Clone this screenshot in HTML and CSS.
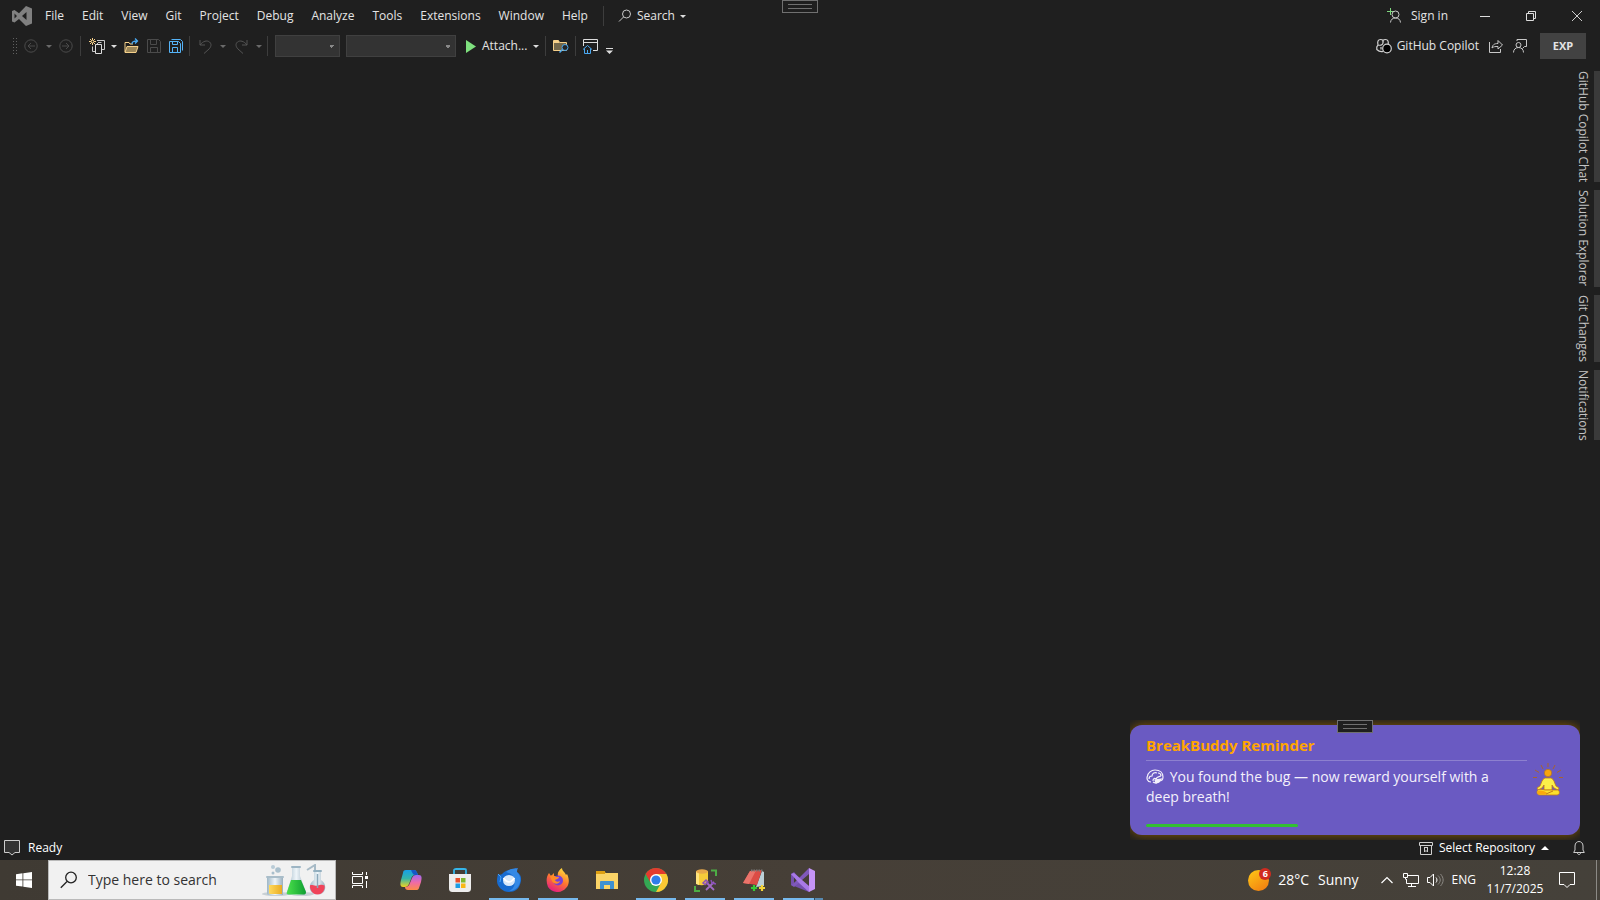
FILE: index.html
```html
<!DOCTYPE html>
<html lang="en">
<head>
<meta charset="utf-8">
<title>Visual Studio</title>
<link rel="stylesheet" href="styles.css">
</head>
<body>
<header class="titlebar">
  <svg class="logo" width="20" height="20" viewBox="0 0 20 20"><path fill="#808080" fill-rule="evenodd" d="M14 0l6 2.500v15L14 20 7 13l-4.500 3.500L0 15.500V5l2.500-1L7 7.200zM14.500 6L10 10l4.500 4zM2.500 7.500v5L5 10z"/></svg>
  <nav class="menu" aria-label="Main menu">
    <button>File</button><button>Edit</button><button>View</button><button>Git</button><button>Project</button><button>Debug</button><button>Analyze</button><button>Tools</button><button>Extensions</button><button>Window</button><button>Help</button>
  </nav>
  <span class="sep"></span>
  <button class="find"><svg width="14" height="14" viewBox="0 0 14 14" fill="none" stroke="#c8c8c8"><circle cx="8.500" cy="5" r="4"/><path d="M5.500 8L1 12.500"/></svg>Search<i class="caret lit"></i></button>
  <div class="spacer"></div>
  <button class="signin"><svg width="14" height="16" viewBox="0 0 14 16" fill="none" stroke="#c8c8c8"><path d="M3.500 0v7M0 3.500h7" stroke="#7fd67f"/><circle cx="8.500" cy="6.500" r="3.500"/><path d="M3.500 14.500c.3-3 2-4.500 5-4.500s4.700 1.500 5 4.500"/></svg>Sign in</button>
  <button class="win" aria-label="Minimize"><svg width="12" height="12" viewBox="0 0 12 12" stroke="#ddd"><path d="M1 6.500h10"/></svg></button>
  <button class="win" aria-label="Restore"><svg width="12" height="12" viewBox="0 0 12 12" fill="none" stroke="#ddd"><path d="M1.500 3.500h7v7h-7zM3.500 3.500v-2h7v7h-2"/></svg></button>
  <button class="win" aria-label="Close"><svg width="12" height="12" viewBox="0 0 12 12" stroke="#ccc"><path d="M1 1l10 10M11 1L1 11"/></svg></button>
</header>
<div class="handle top-handle"></div>

<div class="toolbar" role="toolbar" aria-label="Standard">
  <span class="grip"></span>
  <button aria-label="Back" class="back"><svg width="14" height="14" viewBox="0 0 14 14" fill="none" stroke="#4b4b4b"><circle cx="7" cy="7" r="6.200"/><path d="M11 7H4M7 4L4 7l3 3"/></svg><i class="caret"></i></button>
  <button aria-label="Forward" class="fwd"><svg width="14" height="14" viewBox="0 0 14 14" fill="none" stroke="#4b4b4b"><circle cx="7" cy="7" r="6.200"/><path d="M3 7h7M7 4l3 3-3 3"/></svg></button>
  <span class="sep"></span>
  <button aria-label="New project" class="new"><svg width="17" height="17" viewBox="0 0 17 17" fill="none"><path d="M8 2.500h7.500v9h-3M9 5.500H8M3.500 8.500v5h3M9 4.500h3.500" stroke="#c8c8c8"/><path d="M6.500 6.500h6v9h-6z" stroke="#ddd"/><path d="M3.500 0v7M0 3.500h7M1 1l5 5M6 1L1 6" stroke="#f5d08a"/><circle cx="3.500" cy="3.500" r="1" fill="#202020"/></svg><i class="caret lit"></i></button>
  <div class="files">
    <button aria-label="Open file"><svg width="15" height="16" viewBox="0 0 15 16" fill="none"><path d="M1 14V4.500h4l1 1.500h3" stroke="#f5d08a"/><path d="M1 14.500l2-6h11l-2 6z" fill="#9a8558" stroke="#f5d08a"/><path d="M8 6c0-2 1-3 5-3M11 .5L13.500 3 11 5.500" stroke="#4aa8f0" stroke-width="1.300"/></svg></button>
    <button aria-label="Save"><svg width="14" height="14" viewBox="0 0 14 14" fill="none" stroke="#4b4b4b"><path d="M.5.5h11l2 2v11H.5zM3.500.5v5h6v-5M3.500 13.500v-5h7v5"/></svg></button>
    <button aria-label="Save all"><svg width="14" height="14" viewBox="0 0 14 14" fill="none" stroke="#55b3f7"><path d="M.5 2.500h9l2 2v9H.5zM3.500 2.500v3h5v-3M3.500 13.500v-5h5v5M2.500.5h9l2 2v9"/></svg></button>
  </div>
  <span class="sep"></span>
  <button aria-label="Undo" class="undo"><svg width="13" height="15" viewBox="0 0 13 15" fill="none" stroke="#555"><path d="M1 1v5h5M1 6c3-4 7-5 9.500-3s1.500 5-.5 7l-5 4.500"/></svg><i class="caret"></i></button>
  <button aria-label="Redo" class="undo"><svg width="13" height="15" viewBox="0 0 13 15" fill="none" stroke="#555"><path d="M12 1v5H7M12 6C9 2 5 1 2.500 3s-1.500 5 .5 7l5 4.500"/></svg><i class="caret"></i></button>
  <span class="sep"></span>
  <select class="config" aria-label="Solution configuration" disabled></select>
  <select class="platform" aria-label="Solution platform" disabled></select>
  <button class="attach"><svg width="10" height="13" viewBox="0 0 10 13"><path d="M0 0l10 6.500L0 13z" fill="#7ee07e"/></svg>Attach...<i class="caret lit"></i></button>
  <span class="sep"></span>
  <button aria-label="Find in files" class="tool"><svg width="16" height="14" viewBox="0 0 16 14" fill="none"><path d="M.5 11.500V1.500h5l1 2h7v8z" fill="#74684b" stroke="#f5d08a"/><path d="M1 2h5v2H1z" fill="#f5d08a"/><circle cx="12" cy="8.500" r="3" fill="#252525" stroke="#4aa8f0"/><path d="M9.500 10.500L6.500 13.500" stroke="#4aa8f0" stroke-width="1.500"/></svg></button>
  <span class="sep"></span>
  <button aria-label="Start window" class="tool"><svg width="15" height="15" viewBox="0 0 15 15" fill="none"><path d="M.5 7V.5h14v11H10M.5 3.500h14" stroke="#ddd"/><path d="M0 10.500l4.500-4 4.500 4M1.500 9.500v5h6v-5M4.500 14v-3" stroke="#4aa8f0"/></svg></button>
  <button aria-label="Toolbar options" class="overflow"><svg width="7" height="6" viewBox="0 0 7 6"><path d="M0 0h7v1H0zM0 2.500h7L3.500 6z" fill="#ddd"/></svg></button>
  <div class="spacer"></div>
  <button class="copilot"><svg width="16" height="16" viewBox="0 0 16 16" fill="none" stroke="#d0d0d0" stroke-width="1.200"><path d="M2 7C1.200 3.500 2 1.500 4.500 1.500S7.500 2.500 7 5 4 7.500 2 7zM12 7c.8-3.500 0-5.500-2.500-5.500S6.500 2.500 7 5M2 7l-1.200 2v2.500c2 2 4.200 2.500 6.200 2M5 9v2.500"/><circle cx="11" cy="10.500" r="4.300" fill="#000" stroke="#d0d0d0"/></svg>GitHub Copilot</button>
  <button aria-label="Share" class="small"><svg width="14" height="14" viewBox="0 0 14 14" fill="none" stroke="#c8c8c8"><path d="M.5 3v10.500h11V10M3 9c.5-3 2-4.500 6-4.500v-3L13.500 6 9 10V7.500C6 7.500 4.500 7.500 3 9z"/></svg></button>
  <button aria-label="Feedback" class="small"><svg width="14" height="14" viewBox="0 0 14 14" fill="none" stroke="#c8c8c8"><path d="M4 2V.5h9.500v7h-2L9.500 9.500"/><circle cx="5.500" cy="6" r="2.500"/><path d="M.5 13.500c0-3 2-5 5-5s5 2 5 5"/></svg></button>
  <button class="exp">EXP</button>
</div>

<main class="workspace">
  <nav class="side-tabs" aria-label="Tool windows">
    <button>GitHub Copilot Chat</button><button>Solution Explorer</button><button>Git Changes</button><button>Notifications</button>
  </nav>
</main>

<aside class="toast-frame" aria-label="Reminder">
  <div class="toast">
    <div class="toast-body">
      <h2>BreakBuddy Reminder</h2>
      <p><svg class="brain" width="18" height="15" viewBox="0 0 18 15" fill="none" stroke="#f4f1fb" stroke-width="1.200"><path d="M5 13C1 13 .5 9 1.500 7 2 4 5 1 9 1c5 0 8 3 8 7 0 3-2 4-4 4-1 2-4 2.500-6 1M3 10c0-3 2-3 3-3 0-3 3-4 5-3M7 12c0-3 2-3 3-2 1-3 3-2 5-3M12 4c2 0 3 1 3 3"/><path d="M9 11l6-1-2 3-3 1z" fill="#f4f1fb"/></svg> You found the bug — now reward yourself with a deep breath!</p>
      <progress value="39" max="98" aria-label="Time left"></progress>
    </div>
    <svg class="yogi" width="30" height="33" viewBox="0 0 30 33"><path d="M15 0v4M8 2l2 4M22 2l-2 4M2 7l4 2.500M28 7l-4 2.500M0 14.500h4M30 14.500h-4" stroke="#a7632f" fill="none"/><circle cx="15" cy="10" r="3.700" fill="#f7a50d" stroke="#a86d24" stroke-width=".6"/><path d="M12 15h6c3 1 3.500 5 5 8l3 2-1 2-4-2-2-3v5h-8v-5l-2 3-4 2-1-2 3-2c1.500-3 2-7 5-8z" fill="#fbef49" stroke="#c47a18" stroke-width=".8"/><path d="M4 29c0-3 4-3 8-2l13 0c2 1 2 5-1 5H7c-2 0-3-1-3-3z" fill="#fbdf2d" stroke="#c47a18" stroke-width=".8"/><path d="M5 28c3-1 7 0 9 2l-2 1.500H6C4 31 4 29 5 28z" fill="#f9a90c"/><path d="M13 31l7-3" stroke="#c47a18"/></svg>
  </div>
  <div class="handle toast-handle"></div>
</aside>

<footer class="status">
  <button><svg width="16" height="16" viewBox="0 0 16 16"><path d="M.5.5h15v12H11l-3 2.500-3-2.500H.5z" fill="#333" stroke="#ccc"/></svg>Ready</button>
  <div class="spacer"></div>
  <button class="repo"><svg width="14" height="13" viewBox="0 0 14 13" fill="none" stroke="#d0d0d0"><path d="M.5.5h13v3H.5zM1.500 3.500v9h11v-9M5 5.500h4M5.500 6v4L7 8.500 8.500 10V6"/></svg>Select Repository<svg width="8" height="4" viewBox="0 0 8 4"><path d="M0 4h8L4 0z" fill="#fff"/></svg></button>
  <button aria-label="Notifications" class="bell"><svg width="12" height="14" viewBox="0 0 12 14" fill="none" stroke="#ccc"><path d="M.7 11.500L2 9V5c0-6 8-6 8 0v4l1.300 2.500zM4.500 12c0 2 3 2 3 0"/></svg></button>
</footer>

<footer class="taskbar">
  <button class="start" aria-label="Start"><svg width="16" height="16" viewBox="0 0 16 16" fill="#fff"><path d="M0 2.200l6.500-.9v6.200H0zM7.300 1.200L16 0v7.500H7.300zM0 8.300h6.500v6.300L0 13.700zM7.300 8.300H16V16l-8.700-1.200z"/></svg></button>
  <label class="search">
    <svg width="18" height="18" viewBox="0 0 18 18" fill="none" stroke="#222" stroke-width="1.300"><circle cx="11" cy="6.500" r="5.300"/><path d="M7 10.500L.8 16.700"/></svg>
    <input type="text" placeholder="Type here to search" aria-label="Type here to search">
    <svg width="64" height="33" viewBox="0 0 64 33">
      <defs><linearGradient id="glass"><stop stop-color="#9fb7c6"/><stop offset=".5" stop-color="#eef5f9"/><stop offset="1" stop-color="#9ab0bf"/></linearGradient><linearGradient id="amber"><stop stop-color="#ffd95c"/><stop offset="1" stop-color="#e9ac24"/></linearGradient><linearGradient id="green"><stop stop-color="#4be04b"/><stop offset="1" stop-color="#0f9f32"/></linearGradient></defs>
      <ellipse cx="14" cy="30" rx="14" ry="2" fill="#c8d0d5"/><ellipse cx="40" cy="30" rx="12" ry="2" fill="#c8d0d5"/>
      <circle cx="11" cy="3" r="2" fill="#b9cbd6"/><circle cx="16" cy="6" r="2.800" fill="#a9bfcc"/><circle cx="11" cy="9" r="1.500" fill="#a9bfcc"/>
      <path d="M5 14h16v17H7c-2 0-2-1-2-3z" fill="url(#glass)"/><path d="M7 21h13v9H8c-1 0-1-1-1-2z" fill="url(#amber)"/><rect x="4" y="12" width="18" height="2" rx="1" fill="#a9bdc9"/>
      <path d="M30 3h8v9l6 16c0 2-1 3-3 3H27c-2 0-3-1-2-3l5-16z" fill="url(#glass)"/><path d="M29 16h10l5 12c0 2-1 2.500-3 2.500H27c-2 0-3-1-2-2.500z" fill="url(#green)"/><rect x="29" y="2" width="10" height="2" rx="1" fill="#9db5c4"/>
      <path d="M45 6l8-5v5" fill="none" stroke="#a7bac6" stroke-width="2"/><path d="M52 7h7v9c7 4 5 15-3.500 15S45 20 52 16z" fill="url(#glass)"/><path d="M48 21.500c2-1.500 4 1 7.500 0s5-1 7 0c1 4-2 9-7 9s-8-5-7.500-9z" fill="#f0445a"/><rect x="51" y="6" width="9" height="2" rx="1" fill="#93afbf"/><path d="M55.500 10v14" stroke="#8ba8ba" stroke-width="1.500"/>
    </svg>
  </label>
  <button class="app" aria-label="Task view"><svg width="16" height="16" viewBox="0 0 16 16" fill="none" stroke="#fff"><path d="M.5 0v2.500h10V0M.5 16v-2.500h10V16M.5 4.500h10v7H.5zM14.500 0v3M14.500 9v7"/><path d="M13 4h3v3h-3z" fill="#fff" stroke="none"/></svg></button>
  <div class="apps">
    <button class="app" aria-label="Copilot"><svg width="22" height="21" viewBox="0 0 22 21"><defs><linearGradient id="cpa" x2="0" y2="1"><stop stop-color="#169fe8"/><stop offset=".5" stop-color="#35b5a9"/><stop offset="1" stop-color="#f1d41f"/></linearGradient><linearGradient id="cpb" x2="0" y2="1"><stop stop-color="#9f69ef"/><stop offset=".5" stop-color="#ee6ba7"/><stop offset="1" stop-color="#fd8b48"/></linearGradient></defs><path d="M6 0h8c2 0 3 2 4 5h-3c-2 0-3 1-4 4l-2 5c-1 2-2 3-4 3H3c-3 0-3-3-2-7l2-7c0-2 1-3 3-3z" fill="url(#cpa)"/><path d="M11 0h3c2 0 3 2 4 5h-3c-2 0-3-3-4-5z" fill="#1556c7"/><path d="M16 20H8c-2 0-3-1-3-3 2 0 4-1 5-4l2-5c1-2 2-3 4-3h3c3 0 3 3 2 7l-2 6c-.5 1.500-1 2-3 2z" fill="url(#cpb)"/></svg></button>
    <button class="app" aria-label="Store"><svg width="24" height="24" viewBox="0 0 24 24"><path d="M6 7V2.500C6 1 7 1 8 1h8c2 0 2 0 2 2v4" fill="none" stroke="#35b5e9" stroke-width="1.800"/><path d="M1 6h22v14c0 3-1 4-4 4H5c-3 0-4-1-4-4z" fill="#ededed"/><path d="M7.500 10H12v4.500H7.500z" fill="#e94f2b"/><path d="M13 10h4.500v4.500H13z" fill="#7fb82f"/><path d="M7.500 15.500H12V20H7.500z" fill="#1b9de4"/><path d="M13 15.500h4.500V20H13z" fill="#f9b817"/></svg></button>
    <button class="app open" aria-label="Thunderbird"><svg width="24" height="24" viewBox="0 0 24 24"><path d="M1 6c2 1.500 4 .5 5-1 4-4 9-3 13-5 1 1 .5 2 0 3.500 5 3 6 6 4.500 11.500C22 21 18 24 12 24S0 19 0 13c0-3 .5-5 1-7z" fill="#176bd0"/><path d="M9 4c4-4 8-3 12-4-1 2-1 3-1 4 4 4 4 9 2 13s-6 6-10 6c6-2 8-11 3-16-2-2-4-2-6-3z" fill="#3489e6"/><path d="M1 6l3 3-1 5" stroke="#49a3f5" fill="none"/><ellipse cx="12" cy="12.500" rx="6" ry="5.500" fill="#d8e8fa"/><path d="M6.500 10c2 3 4 4 5.500 4s4-2 5.500-4" stroke="#fff" stroke-width="1.500" fill="none"/></svg></button>
    <button class="app open" aria-label="Firefox"><svg width="24" height="24" viewBox="0 0 24 24"><defs><linearGradient id="fox" x1=".8" x2=".3" y2="1"><stop stop-color="#ffe43d"/><stop offset=".5" stop-color="#ff782f"/><stop offset="1" stop-color="#e41b83"/></linearGradient></defs><path d="M3 5l2 3 3-3v3h4c-1-3 1-6 4-8 0 3 3 4 4 7l1-1c3 6 2 11-1 14-5 6-14 5-18-1C0 14 0 9 3 5z" fill="url(#fox)"/><circle cx="12" cy="12.500" r="5" fill="#7640d8"/><path d="M4 8c3-2 5 0 6 1h3c0 2-3 2-4 3 1 2 3 2 5 1-1 4-7 3-8 0z" fill="#ff8b25"/></svg></button>
    <button class="app" aria-label="File Explorer"><svg width="22" height="18" viewBox="0 0 22 18"><path d="M0 0h8l2 2H0z" fill="#d99a0e"/><path d="M0 2h22v16H0z" fill="#fbd467"/><path d="M0 0h9v3H0z" fill="#dfa012"/><path d="M4 18v-6c0-2 0-2 2-2h10c2 0 2 0 2 2v6h-4v-4H8v4z" fill="#3f91d2"/></svg></button>
    <button class="app open" aria-label="Chrome"><svg width="24" height="24" viewBox="0 0 24 24"><circle cx="12" cy="12" r="12" fill="#34a853"/><path d="M12 12L1.600 6A12 12 0 0 1 22.400 6z" fill="#e33b2e"/><path d="M12 6h10.400A12 12 0 0 1 12 24l5-9z" fill="#fcc934"/><path d="M1.600 6l5.200 9L12 6z" fill="#e33b2e"/><circle cx="12" cy="12" r="6" fill="#fff"/><circle cx="12" cy="12" r="4.600" fill="#2f7de9"/></svg></button>
    <button class="app open" aria-label="SQL Server Management Studio"><svg width="23" height="23" viewBox="0 0 23 23" fill="none"><path d="M2 2v12c2 3 9 3 12 0V2z" fill="#f6cb3a"/><path d="M2 3h3v13l-3-1z" fill="#ffe37c"/><ellipse cx="8" cy="2.500" rx="6" ry="2.200" fill="#e7a84a"/><path d="M17 1.500h5V7M1 17v5h5" stroke="#4dae45" stroke-width="2"/><path d="M12 13l8 8M20 13l-8 8" stroke="#a06bc5" stroke-width="1.800"/><path d="M9 14l3-3 2 2-3 2.500zM17 11l1 3 4 1" stroke="#8a4fb8" stroke-width="1.500"/></svg></button>
    <button class="app open" aria-label="Notepad"><svg width="23" height="23" viewBox="0 0 23 23"><path d="M19 2l2 1v14l-8 1z" fill="#bcd0d8"/><path d="M7 2l12-1-5 15-14-2z" fill="#dc4c45"/><path d="M7 2l6-.5L6 15l-6-1z" fill="#ea746b"/><path d="M8 1.500h12" stroke="#777" stroke-width="2" stroke-dasharray="1.500 1"/><path d="M11 16v6M8 19h6" stroke="#38c838" stroke-width="2.200"/><path d="M19 16v6M16 19h6" stroke="#f4d43a" stroke-width="2.200"/></svg></button>
    <button class="app open multi" aria-label="Visual Studio"><svg width="24" height="24" viewBox="0 0 24 24"><path d="M0 6l3-2 14 16 1 4L3 18l-3-1zm3 3v6l4-3z" fill="#7450ac" fill-rule="evenodd"/><path d="M0 17l3 2L18 6V0L3 15z" fill="#7f58bb"/><path d="M0 6l3-1 15 13v6L8 15z" fill="#a879e6"/><path d="M18 0l6 3v18l-6 3z" fill="#c594f6"/></svg></button>
  </div>
  <div class="spacer"></div>
  <button class="weather"><span class="sun"><b>6</b></span><span>28°C</span><span>Sunny</span></button>
  <div class="tray">
    <button aria-label="Show hidden icons" class="chevron"><svg width="12" height="8" viewBox="0 0 12 8" fill="none" stroke="#fff" stroke-width="1.200"><path d="M.5 7L6 1.500 11.500 7"/></svg></button>
    <button aria-label="Network"><svg width="16" height="14" viewBox="0 0 16 14" fill="none" stroke="#fff"><path d="M5 2.500h10.500v8H3.500V6M.5.500h4v4h-4zM2.500 4.500v2M8.500 10.500v3M5 13.500h8"/></svg></button>
    <button aria-label="Volume"><svg width="17" height="14" viewBox="0 0 17 14" fill="none" stroke="#fff"><path d="M.5 4.500H3L6.500 1v12L3 9.500H.5zM9 4.500c1.300 1.500 1.300 3.500 0 5"/><path d="M11 2.500c3 3 3 6 0 9M13.500 1c3.500 4 3.500 8 0 12" stroke="#8b8984"/></svg></button>
    <button class="lang">ENG</button>
  </div>
  <button class="clock"><span>12:28</span><span>11/7/2025</span></button>
  <button class="action" aria-label="Action center"><svg width="16" height="16" viewBox="0 0 16 16" fill="none" stroke="#fff"><path d="M.5.500h15v12H11L8 15.500 5 12.500H.5z"/></svg></button>
  <button class="desktop" aria-label="Show desktop"></button>
</footer>
</body>
</html>
```
FILE: styles.css
```css
* { box-sizing: border-box; }
body {
  margin: 0;
  min-height: 100vh;
  display: flex;
  flex-direction: column;
  position: relative;
  background: #1f1f1f;
  color: #e4e4e4;
  font: 12px/16px "Open Sans", "Noto Sans", sans-serif;
}
button {
  display: flex;
  align-items: center;
  margin: 0;
  padding: 0;
  border: 0;
  background: none;
  color: inherit;
  font: inherit;
  white-space: nowrap;
}
svg { display: block; flex: none; }
.spacer { flex: 1; }
.sep { width: 1px; height: 20px; background: #3d3d3d; }
.caret { border: 3px solid transparent; border-top-color: #6a6a6a; border-bottom: 0; }
.caret.lit { border-top-color: #ddd; }

.titlebar { display: flex; align-items: center; height: 32px; padding-left: 12px; }
.menu { display: flex; gap: 18px; padding: 0 15px 0 13px; }
.find { gap: 5px; padding-left: 14px; }
.signin { gap: 10px; padding-right: 14px; }
.win { width: 46px; height: 32px; justify-content: center; }

.handle {
  position: absolute;
  width: 36px;
  height: 13px;
  border: 1px solid #707070;
  background: #1f1f1f;
  display: flex;
  align-items: center;
  justify-content: center;
}
.handle::before { content: ""; width: 24px; height: 3px; border: solid #707070; border-width: 1px 0; }
.top-handle { top: 0; left: calc(50% - 18px); }

.toolbar { display: flex; align-items: center; height: 28px; padding: 0 14px 0 12px; }
.grip {
  width: 6px;
  height: 18px;
  margin-right: 6px;
  background: radial-gradient(circle, #606060 25%, transparent 30%) 0 0 / 3px 3px;
}
.back { gap: 8px; padding-right: 7px; }
.fwd { padding-right: 7px; }
.new { gap: 5px; padding: 0 7px 0 8px; }
.files { display: flex; align-items: center; gap: 8px; padding-right: 6px; }
.undo { gap: 8px; padding-left: 9px; }
.undo + .sep { margin: 0 7px 0 5px; }
.toolbar select {
  appearance: none;
  height: 22px;
  border: 1px solid #404040;
  border-radius: 0;
  background-color: #333;
  background-image: linear-gradient(to bottom left, #888 50%, transparent 50%), linear-gradient(to bottom right, #888 50%, transparent 50%);
  background-size: 3px 3px;
  background-repeat: no-repeat;
  background-position: right 7px top 9px, right 4px top 9px;
  opacity: 1;
}
.config { width: 65px; margin-right: 6px; }
.platform { width: 110px; }
.attach { gap: 6px; padding: 0 6px 0 10px; }
.tool { padding: 0 6px 0 7px; }
.overflow { padding: 10px 0 0 2px; }
.copilot { gap: 5px; }
.small { padding-left: 10px; }
.exp {
  width: 46px;
  height: 26px;
  margin-left: 13px;
  justify-content: center;
  background: #424242;
  font-size: 11px;
  font-weight: 700;
}

.workspace { flex: 1; display: flex; justify-content: flex-end; padding-top: 11px; }
.side-tabs { display: flex; flex-direction: column; gap: 8px; color: #c4c4c4; }
.side-tabs button {
  writing-mode: vertical-rl;
  display: block;
  width: 25px;
  padding-right: 3px;
  border-right: 6px solid #3a3a3a;
}

.toast-frame {
  position: absolute;
  right: 20px;
  bottom: 60px;
  width: 450px;
  padding: 5px 0;
  display: flex;
  overflow: hidden;
}
.toast {
  flex: 1;
  display: flex;
  align-items: center;
  gap: 6px;
  min-height: 110px;
  padding: 10px 17px 8px 16px;
  border-radius: 12px;
  background: #6a5ac2;
  box-shadow: 0 0 12px #8a5a00;
}
.toast-body { flex: 1; }
.toast h2 {
  margin: 0;
  padding-bottom: 5px;
  border-bottom: 1px solid #8d80cf;
  color: #ffa500;
  font-size: 15px;
  line-height: 20px;
}
.toast p { margin: 6px 0 17px; padding-right: 16px; color: #f4f1fb; font-size: 14px; line-height: 20px; }
.brain { display: inline-block; vertical-align: -2px; margin-right: 2px; }
.yogi { margin-bottom: 4px; }
.toast progress {
  appearance: none;
  display: block;
  width: 100%;
  height: 3px;
  border: 0;
  background: none;
}
.toast progress::-webkit-progress-bar { background: none; }
.toast progress::-webkit-progress-value { background: #32c032; border-radius: 2px; }
.toast-handle { top: 0; left: calc(50% - 18px); }

.status { display: flex; align-items: center; height: 24px; padding: 0 15px 0 4px; color: #fff; }
.status button { gap: 8px; }
.status .repo { gap: 6px; padding-right: 24px; }

.taskbar {
  display: flex;
  height: 40px;
  background: linear-gradient(90deg, #3f3a33, #463f37 50%, #45413a);
  color: #fff;
}
.start { width: 48px; justify-content: center; }
.search {
  display: flex;
  align-items: center;
  gap: 10px;
  width: 288px;
  padding: 0 9px 0 11px;
  border: 1px solid #bababa;
  background: #f1f1f1;
}
.search input {
  flex: 1;
  min-width: 0;
  padding: 0;
  border: 0;
  outline: 0;
  background: none;
  font: 14px/20px "Open Sans", sans-serif;
}
.search input::placeholder { color: #333; opacity: 1; }
.app { width: 48px; justify-content: center; position: relative; }
.apps { display: flex; gap: 1px; padding-left: 3px; }
.app.open::after {
  content: "";
  position: absolute;
  left: 4px;
  right: 4px;
  bottom: 0;
  height: 2px;
  background: #76b9ed;
}
.app.multi::after { background: linear-gradient(90deg, #76b9ed 31px, #2f4a5e 31px, #2f4a5e 32px, #5789b0 32px); }
.weather { gap: 9px; padding-right: 22px; font-size: 14px; }
.sun {
  position: relative;
  width: 21px;
  height: 21px;
  border-radius: 50%;
  background: linear-gradient(145deg, #ffc916, #f07810);
}
.sun b {
  position: absolute;
  top: -2px;
  right: -2px;
  width: 12px;
  height: 12px;
  border-radius: 50%;
  background: #d02b20;
  font-size: 9px;
  line-height: 12px;
}
.tray { display: flex; gap: 8px; padding-right: 13px; }
.chevron { padding-right: 2px; }
.clock { flex-direction: column; justify-content: center; width: 52px; line-height: 18px; }
.action { padding: 0 21px 0 18px; }
.desktop { width: 4px; border-left: 1px solid #8c8a86; }
```
